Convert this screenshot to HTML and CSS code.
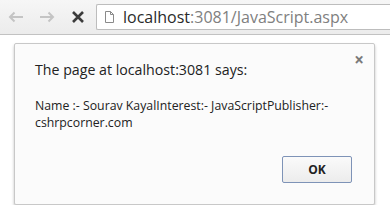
FILE: index.html
```html
<!DOCTYPE html>
<html lang="en">
<head>
  <meta charset="UTF-8">
  <title>JavaScript.aspx</title>
  <link rel="stylesheet" href="styles.css">
</head>
<body>

  <div class="toolbar">
    <svg class="nav-icon" width="16" height="12" viewBox="0 0 16 12">
      <path d="M15 6H2M6.5 1.5L2 6l4.5 4.5" fill="none" stroke="#c4c4c4" stroke-width="2"/>
    </svg>
    <svg class="nav-icon" width="16" height="12" viewBox="0 0 16 12">
      <path d="M1 6h13M9.5 1.5L14 6l-4.5 4.5" fill="none" stroke="#c4c4c4" stroke-width="2"/>
    </svg>
    <svg class="nav-icon stop" width="14" height="14" viewBox="0 0 14 14">
      <path d="M2 2l10 10M12 2L2 12" fill="none" stroke="#3c3c3c" stroke-width="2.6"/>
    </svg>
    <div class="omnibox">
      <svg class="page-icon" width="9" height="12" viewBox="0 0 9 12">
        <path d="M0.5 0.5h5l3 3v8h-8z M5.5 0.5v3h3" fill="#fff" stroke="#8a8a8a" stroke-width="1"/>
      </svg>
      <span class="host">localhost</span><span class="path">:3081/JavaScript.aspx</span>
    </div>
  </div>

  <div class="dialog">
    <span class="close">&times;</span>
    <div class="title">The page at localhost:3081 says:</div>
    <div class="message">Name :- Sourav KayalInterest:- JavaScriptPublisher:- cshrpcorner.com</div>
    <div class="actions">
      <button class="ok">OK</button>
    </div>
  </div>

</body>
</html>
```

FILE: styles.css
```css
body {
  margin: 0;
  background: #fff;
  font-family: "Open Sans", "Liberation Sans", sans-serif;
}

.toolbar {
  height: 35px;
  box-sizing: border-box;
  background: linear-gradient(#f6f6f6, #ececec);
  border-bottom: 1px solid #c2c2c2;
  display: flex;
  align-items: flex-start;
  padding-top: 4px;
}

.nav-icon {
  margin-top: 7px;
  margin-left: 8px;
  margin-right: 7px;
}

.stop {
  margin-top: 6px;
  margin-left: 9px;
  margin-right: 10px;
}

.omnibox {
  flex: 1;
  height: 26px;
  box-sizing: border-box;
  margin-left: 1px;
  background: #fff;
  border: 1px solid #bdbdbd;
  border-right: none;
  border-radius: 2px 0 0 2px;
  display: flex;
  align-items: center;
  padding-left: 8px;
  font-size: 16px;
}

.page-icon {
  margin-right: 9px;
}

.host {
  color: #2a2a2a;
}

.path {
  color: #808080;
}

.dialog {
  position: relative;
  margin: 8px 0 0 14px;
  width: 361px;
  height: 162px;
  box-sizing: border-box;
  background: #fbfbfb;
  border: 1px solid #c8c8c8;
  border-radius: 2px;
  box-shadow: 0 2px 3px rgba(0,0,0,0.25);
  padding: 16px 20px 0 20px;
}

.close {
  position: absolute;
  top: 4px;
  right: 10px;
  font-size: 17px;
  font-weight: bold;
  color: #7a7a7a;
}

.title {
  font-size: 14.2px;
  color: #222;
}

.message {
  margin-top: 18px;
  font-size: 12.3px;
  line-height: 17px;
  color: #222;
}

.actions {
  display: flex;
  justify-content: flex-end;
  margin-top: 25px;
  padding-right: 2px;
}

.ok {
  width: 70px;
  height: 27px;
  font-family: "Open Sans", "Liberation Sans", sans-serif;
  font-weight: bold;
  font-size: 12px;
  color: #222;
  background: linear-gradient(#fafafa, #ececec);
  border: 1px solid #7e93b7;
  border-radius: 2px;
}
```
